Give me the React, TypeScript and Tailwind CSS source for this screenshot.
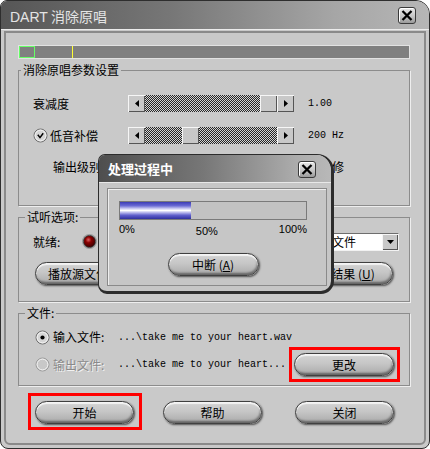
import type { ReactNode } from "react";

const cjk = "font-['Noto_Sans_CJK_SC',sans-serif]";
const mono = "font-['Liberation_Mono','DejaVu_Sans_Mono',monospace]";
const raised = "bg-[#c8c8c8] shadow-[inset_1px_1px_0_#f6f6f6,inset_-1px_-1px_0_#555555]";
const checker =
  "h-full bg-[repeating-conic-gradient(#262626_0%_25%,#d4d4d4_0%_50%)] bg-size-[2px_2px]";

const XIcon = () => (
  <svg width="12" height="11" viewBox="0 0 12 11">
    <path d="M1.5 1 L10.5 10 M10.5 1 L1.5 10" stroke="#000" strokeWidth="2.3" />
  </svg>
);

const CloseButton = () => (
  <div className="flex h-[17px] w-[18px] items-center justify-center rounded-[3px] border border-[#3a3a3a] bg-[linear-gradient(to_bottom,#e8e8e8,#c6c6c6_55%,#9a9a9a)] shadow-[inset_1px_1px_0_#ffffff]">
    <XIcon />
  </div>
);

const ArrowButton = ({ dir }: { dir: "left" | "right" }) => (
  <div className={`flex h-full w-[17px] items-center justify-center ${raised}`}>
    <svg width="4" height="7" viewBox="0 0 4 7">
      <path d={dir === "left" ? "M4 0 L0 3.5 L4 7 Z" : "M0 0 L4 3.5 L0 7 Z"} fill="#000" />
    </svg>
  </div>
);

// scroll-bar style slider; before/after = checkered track widths around the thumb
const Slider = ({ before, after }: { before: number; after: number }) => (
  <div className="flex h-[17px] w-[166px] shrink-0">
    <ArrowButton dir="left" />
    <div className={checker} style={{ width: before }} />
    <div className={`h-full w-[17px] ${raised}`} />
    <div className={checker} style={{ width: after }} />
    <ArrowButton dir="right" />
  </div>
);

const Radio = ({ mark, disabled }: { mark: "dot" | "check" | "none"; disabled?: boolean }) => (
  <svg width="15" height="15" viewBox="0 0 15 15" className="shrink-0">
    <circle cx="7.5" cy="7.5" r="6.5" fill={disabled ? "#c8c8c8" : "#d6d6d6"} stroke={disabled ? "#9a9a9a" : "#6e6e6e"} />
    <circle cx="7.5" cy="7.5" r="5.4" fill="none" stroke="#f4f4f4" strokeWidth="1" />
    {mark === "dot" && <circle cx="7.5" cy="7.5" r="2.1" fill="#000" />}
    {mark === "check" && <path d="M4.8 6.8 L7 9.6 L10.2 5.2" fill="none" stroke="#000" strokeWidth="1.5" />}
  </svg>
);

const PillButton = ({ children, w = "w-[99px]" }: { children: ReactNode; w?: string }) => (
  <div
    className={`flex h-[23px] ${w} shrink-0 items-center justify-center whitespace-nowrap rounded-full border border-[#404040] bg-[linear-gradient(to_bottom,#d4d4d4,#c6c6c6_45%,#b4b4b4_80%,#989898)] shadow-[inset_0_2px_1px_rgba(255,255,255,0.75),inset_-1px_-2px_2px_rgba(0,0,0,0.35),1px_1px_2px_rgba(0,0,0,0.6)] text-[12px] text-black ${cjk}`}
  >
    {children}
  </div>
);

const Group = ({
  title,
  h,
  legendMl,
  children,
}: {
  title: string;
  h: string;
  legendMl: string;
  children: ReactNode;
}) => (
  <fieldset className={`mt-[3px] ${h} border border-[#8c8c8c] shadow-[1px_1px_0_#eeeeee]`}>
    <legend className={`${legendMl} px-[2px] text-[12px] leading-[16px] text-black ${cjk}`}>{title}</legend>
    {children}
  </fieldset>
);

export default function App() {
  const progress = 38;

  return (
    <div className="h-[449px] w-[430px] bg-white">
      <div className="relative flex h-[449px] w-[430px] flex-col overflow-hidden rounded-t-[7px] rounded-tr-[14px] rounded-b-[8px] border border-[#2e2e2e] bg-[#c9c9c9]">
        {/* title bar */}
        <div className="flex h-[28px] shrink-0 items-center justify-between bg-[linear-gradient(to_right,#565656,#777777_40%,#a6a6a6_78%,#b6b6b6)] pl-[9px] pr-[13px]">
          <span className={`mt-[3px] text-[14px] leading-none text-[#e4e4e4] ${cjk}`}>
            <span className="font-['Liberation_Sans',sans-serif]">DART</span> 消除原唱
          </span>
          <CloseButton />
        </div>
        <div className="h-px shrink-0 bg-[#ececec]" />

        {/* frame */}
        <div className="mx-[3px] mb-[3px] mt-px flex flex-1 flex-col rounded-b-[6px] border-2 border-[#8a8a8a] pl-[12px] pr-[14px] pt-[12px]">
          {/* position strip */}
          <div className="flex h-[14px] shrink-0 border border-[#e2e2e2] bg-[#808080]">
            <div className="h-full w-[16px] border border-[#66ff66]" />
            <div className="w-[37px]" />
            <div className="h-full w-px bg-[#ffff33]" />
          </div>

          <Group title="消除原唱参数设置" h="h-[144px]" legendMl="ml-[2px]">
            <div className={`flex flex-col pt-[17px] text-[12px] text-black ${cjk}`}>
              <div className="flex h-[17px] items-center pl-[14px]">
                <span className="w-[95px]">衰减度</span>
                <Slider before={115} after={0} />
                <span className={`ml-[14px] text-[10px] ${mono}`}>1.00</span>
              </div>
              <div className="mt-[15px] flex h-[17px] items-center pl-[14px]">
                <div className="flex w-[95px] items-center gap-[2px]">
                  <Radio mark="check" />
                  <span>低音补偿</span>
                </div>
                <Slider before={37} after={78} />
                <span className={`ml-[14px] text-[10px] ${mono}`}>200 Hz</span>
              </div>
              <div className="mt-[14px] flex h-[17px] items-center pl-[34px]">
                <span className="w-[75px]">输出级别</span>
                <Slider before={66} after={49} />
                <span className="ml-[14px]">自动修</span>
              </div>
            </div>
          </Group>

          <Group title="试听选项:" h="h-[93px]" legendMl="ml-[6px]">
            <div className={`flex flex-col pt-[8px] text-[12px] text-black ${cjk}`}>
              <div className="flex h-[17px] items-center pl-[14px] pr-[10px]">
                <span className="w-[50px]">就绪:</span>
                <div className="h-[13px] w-[13px] rounded-full border border-[#3a3a3a] bg-[radial-gradient(circle_at_40%_35%,#e06060_0%,#8a0000_30%,#2e0000_85%)] shadow-[0_0_0_1px_#9a9a9a]" />
                <div className="ml-auto flex h-[18px] w-[105px] border border-t-[#6e6e6e] border-l-[#6e6e6e] border-r-[#f2f2f2] border-b-[#f2f2f2]">
                  <div className="flex-1 overflow-hidden whitespace-nowrap bg-white pl-[1px] leading-[16px]">源音频文件</div>
                  <div className={`flex h-full w-[16px] items-center justify-center ${raised}`}>
                    <svg width="7" height="4" viewBox="0 0 7 4">
                      <path d="M0 0 L7 0 L3.5 4 Z" fill="#000" />
                    </svg>
                  </div>
                </div>
              </div>
              <div className="mt-[12px] flex items-center justify-between pl-[16px] pr-[16px]">
                <PillButton w="w-[104px]">
                  播放源文件 (<span className="underline">S</span>)
                </PillButton>
                <PillButton w="w-[104px]">
                  处理结果 (<span className="underline">U</span>)
                </PillButton>
              </div>
            </div>
          </Group>

          <Group title="文件:" h="h-[81px]" legendMl="ml-[6px]">
            <div className={`flex flex-col pt-[8px] text-[12px] text-black ${cjk}`}>
              <div className="flex h-[16px] items-center gap-[3px] pl-[16px]">
                <Radio mark="dot" />
                <span className="w-[62px] shrink-0">输入文件:</span>
                <span className={`shrink-0 whitespace-nowrap text-[10px] ${mono}`}>...\take me to your heart.wav</span>
              </div>
              <div className="mt-[8px] flex h-[23px] items-center gap-[3px] pl-[16px] pr-[15px]">
                <Radio mark="none" disabled />
                <span className="w-[62px] shrink-0 text-[#8a8a8a] [text-shadow:1px_1px_0_#f2f2f2]">输出文件:</span>
                <span className={`shrink-0 whitespace-nowrap text-[10px] ${mono}`}>...\take me to your heart...</span>
                <div className="relative ml-auto">
                  <PillButton w="w-[100px]">更改</PillButton>
                  <div className="absolute -bottom-[6px] -left-[5px] -right-[6px] -top-[6px] border-[3px] border-[#ff0000]" />
                </div>
              </div>
            </div>
          </Group>

          {/* bottom buttons */}
          <div className="mt-[15px] flex items-center pl-[17px]">
            <div className="relative">
              <PillButton>开始</PillButton>
              <div className="absolute -bottom-[6px] -left-[7px] -right-[8px] -top-[8px] border-[3px] border-[#ff0000]" />
            </div>
            <div className="ml-[29px]">
              <PillButton>帮助</PillButton>
            </div>
            <div className="ml-[33px]">
              <PillButton>关闭</PillButton>
            </div>
          </div>
        </div>

        {/* processing dialog */}
        <div className="absolute left-[97px] top-[153px] flex h-[140px] w-[236px] flex-col overflow-hidden rounded-bl-[9px] rounded-br-[13px] rounded-tl-[7px] rounded-tr-[17px] border-b-[3px] border-l border-r-[3px] border-t border-[#2c2c2c] bg-[#c6c6c6]">
          <div className="flex h-[27px] shrink-0 items-center justify-between bg-[linear-gradient(to_right,#4e4e4e,#777777_45%,#acacac_85%,#b8b8b8)] pl-[9px] pr-[15px]">
            <span className={`text-[13px] font-bold leading-none text-white ${cjk}`}>处理过程中</span>
            <div className="mt-[2px]">
              <CloseButton />
            </div>
          </div>
          <div className="h-px shrink-0 bg-[#e8e8e8]" />
          <div className="flex flex-1 flex-col pb-[5px] pl-[8px] pr-[4px] pt-[5px]">
            <div className="flex flex-1 flex-col border border-[#8a8a8a] pl-[11px] pt-[12px] shadow-[inset_1px_1px_0_#eeeeee]">
              <div className="flex w-[188px] flex-col">
                <div className="h-[19px] w-full border border-[#7a7a7a] bg-[#c2c2c2]">
                  <div
                    className="h-full bg-[linear-gradient(to_bottom,#3c3cb4,#6a6ad4_22%,#d0d0f4_40%,#ffffff_50%,#c4c4f0_60%,#6060cc_78%,#30309e)]"
                    style={{ width: `${progress}%` }}
                  />
                </div>
                <div className="mt-[3px] flex h-[12px] items-start justify-between font-['Liberation_Sans',sans-serif] text-[11px] leading-[12px] text-black">
                  <span>0%</span>
                  <span className="mt-[2px]">50%</span>
                  <span>100%</span>
                </div>
                <div className="mt-[18px] flex justify-center">
                  <PillButton w="w-[91px]">
                    中断 (<span className="underline">A</span>)
                  </PillButton>
                </div>
              </div>
            </div>
          </div>
        </div>
      </div>
    </div>
  );
}
